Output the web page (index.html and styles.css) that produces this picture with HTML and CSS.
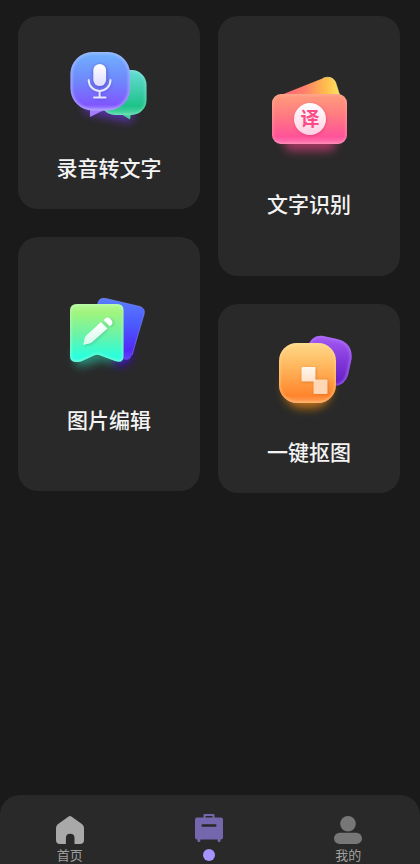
FILE: index.html
```html
<!DOCTYPE html>
<html lang="zh-CN">
<head>
<meta charset="utf-8">
<meta name="viewport" content="width=device-width, initial-scale=1">
<title>工具箱</title>
<link rel="stylesheet" href="styles.css">
</head>
<body>
<main class="tools">
  <div class="column">
    <a class="card card-audio" href="#audio">
      <svg class="art" viewBox="-1 5 120 96" aria-hidden="true">
        <defs>
          <linearGradient id="a-front" x1="0" y1="0" x2="0" y2="1"><stop offset="0" stop-color="#70b2ff"/><stop offset=".5" stop-color="#6f86fb"/><stop offset=".9" stop-color="#8057ff"/><stop offset="1" stop-color="#a184ff"/></linearGradient>
          <linearGradient id="a-back" x1="0" y1="0" x2="0" y2="1"><stop offset="0" stop-color="#68dcd6"/><stop offset=".8" stop-color="#1fc28a"/><stop offset="1" stop-color="#55d7a6"/></linearGradient>
          <linearGradient id="a-mic" x1="0" y1="0" x2="0" y2="1"><stop offset="0" stop-color="#fff"/><stop offset="1" stop-color="#dfdcff"/></linearGradient>
          <filter id="glow" x="-50%" y="-120%" width="200%" height="340%"><feGaussianBlur stdDeviation="5"/></filter>
          <filter id="soft" x="-20%" y="-20%" width="140%" height="140%"><feGaussianBlur stdDeviation="1.5"/></filter>
          <clipPath id="a-clip"><rect x="20.500" y="17" width="59.500" height="58.500" rx="22"/></clipPath>
          <clipPath id="a-clip2"><rect x="50" y="35" width="46.500" height="45" rx="15"/></clipPath>
        </defs>
        <path d="M34 66H84L82 87 65 84 50 81 34 77Z" fill="#6a35d8" opacity=".75" filter="url(#glow)"/>
        <path d="M71 79L80 84.500 81 78Z" fill="#48d09c"/>
        <rect x="50" y="35" width="46.500" height="45" rx="15" fill="url(#a-back)"/>
        <g clip-path="url(#a-clip2)"><rect x="50" y="35" width="46.500" height="45" rx="15" fill="none" stroke="#a6f2dd" stroke-width="2" opacity=".6" filter="url(#soft)"/></g>
        <path d="M40 73V82L56 74Z" fill="#a77dff"/>
        <rect x="20.500" y="17" width="59.500" height="58.500" rx="22" fill="url(#a-front)"/>
        <g clip-path="url(#a-clip)"><rect x="20.500" y="17" width="59.500" height="58.500" rx="22" fill="none" stroke="#c3c5ff" stroke-width="3" opacity=".7" filter="url(#soft)"/></g>
        <g transform="translate(.5 1)" opacity=".45" filter="url(#soft)" stroke="#4333b4" fill="none" stroke-width="2"><rect x="43" y="29" width="13" height="22" rx="6.500" fill="#4333b4"/><path d="M39 45a10.500 10.500 0 0 0 21 0M49.500 56v6M44 62.500h12"/></g>
        <rect x="43.300" y="29" width="12.800" height="22" rx="6.400" fill="url(#a-mic)"/>
        <path d="M38.700 45a10.900 10.900 0 0 0 21.800 0M49.600 56v6M44 62.500h11.500" fill="none" stroke="#e8e8ff" stroke-width="2" stroke-linecap="round"/>
      </svg>
      <span class="card-title">录音转文字</span>
    </a>
    <a class="card card-edit" href="#edit">
      <svg class="art" viewBox="-1 12 120 96" aria-hidden="true">
        <defs>
          <linearGradient id="e-front" x1="0" y1="0" x2="0" y2="1"><stop offset="0" stop-color="#b4f995"/><stop offset=".15" stop-color="#a0f47d"/><stop offset=".55" stop-color="#68f3aa"/><stop offset=".9" stop-color="#2affdc"/><stop offset="1" stop-color="#3df5dc"/></linearGradient>
          <linearGradient id="e-back" x1="0" y1="0" x2="0" y2="1"><stop offset="0" stop-color="#5a7dff"/><stop offset=".45" stop-color="#4b58ff"/><stop offset=".85" stop-color="#5427fa"/><stop offset="1" stop-color="#6545f3"/></linearGradient>
          <linearGradient id="e-pen" x1="0" y1="0" x2="0" y2="1"><stop offset="0" stop-color="#fff"/><stop offset="1" stop-color="#d5faea"/></linearGradient>
          <clipPath id="e-clip"><path d="M27 24H67Q73.500 24 73.500 30V76Q73.500 84 65 81L49 75Q46.500 74.200 44 75.500L31 81.500Q20 84 20 76V31Q20 24 27 24Z"/></clipPath>
        </defs>
        <path d="M24 69H66V84L52 80 34 86H26Z" fill="#29cfae" opacity=".6" filter="url(#glow)"/>
        <path d="M65 62H81V80L67 88Z" fill="#4710ff" opacity=".75" filter="url(#glow)"/>
        <path d="M52.500 18.300Q54 18 56 18.500L90 26.500Q95.500 28.500 94.200 34L82 75Q80.500 79.800 76 79.700L66 78 47.500 25Q48 19 52.500 18.300Z" fill="url(#e-back)"/>
        <path d="M47.500 24Q49 17 56 18.500L90 26.500Q95.500 28.500 94.200 34L82 75" fill="none" stroke="#8496ff" opacity=".5"/>
        <path d="M27 24H67Q73.500 24 73.500 30V76Q73.500 84 65 81L49 75Q46.500 74.200 44 75.500L31 81.500Q20 84 20 76V31Q20 24 27 24Z" fill="url(#e-front)"/>
        <g clip-path="url(#e-clip)"><path d="M27 24H67Q73.500 24 73.500 30V76Q73.500 84 65 81L49 75Q46.500 74.200 44 75.500L31 81.500Q20 84 20 76V31Q20 24 27 24Z" fill="none" stroke="#c8ffdc" stroke-width="2" opacity=".6" filter="url(#soft)"/></g>
        <g opacity=".35" filter="url(#soft)" transform="translate(1 1)" fill="#127e72"><path d="M33 65L35.500 57 51 42 57 48 41 63Z"/><path d="M54 40L58 37.500 62 40 63 43 59 46Z"/></g>
        <path d="M33 65L34.800 58Q35.200 56.500 36.200 55.500L51 42 57.500 48.500 42 62.300Q41 63.200 39.500 63.500Z" fill="url(#e-pen)"/>
        <path d="M53.500 40L56 38Q58 36.800 60 38.500L62 41Q63.300 43 61.800 44.500L59.800 46.300Z" fill="#fff"/>
      </svg>
      <span class="card-title">图片编辑</span>
    </a>
  </div>
  <div class="column">
    <a class="card card-text" href="#text">
      <svg class="art" viewBox="-1 16 120 96" aria-hidden="true">
        <defs>
          <linearGradient id="t-front" x1="0" y1="0" x2="0" y2="1"><stop offset="0" stop-color="#ff9d7c"/><stop offset=".4" stop-color="#ff7d80"/><stop offset=".85" stop-color="#ff5399"/><stop offset="1" stop-color="#ff79b6"/></linearGradient>
          <linearGradient id="t-back" x1="0" y1="0" x2="1" y2="0"><stop offset="0" stop-color="#ff6678"/><stop offset=".4" stop-color="#ff806c"/><stop offset=".75" stop-color="#ffbd4d"/><stop offset="1" stop-color="#ffe564"/></linearGradient>
          <linearGradient id="t-disc" x1="0" y1="0" x2="0" y2="1"><stop offset="0" stop-color="#fff"/><stop offset="1" stop-color="#ffd1e2"/></linearGradient>
          <clipPath id="t-clip"><rect x="22" y="34" width="75" height="50" rx="9"/></clipPath>
        </defs>
        <rect x="34" y="72" width="52" height="19" rx="8" fill="#e2417e" opacity=".65" filter="url(#glow)"/>
        <path d="M31 35L73 18.200Q82 15 85.500 22L90.500 38H31Z" fill="url(#t-back)"/>
        <path d="M73 18.200Q82 15 85.500 22L90 36" fill="none" stroke="#ffef8c" opacity=".6"/>
        <rect x="22" y="34" width="75" height="50" rx="9" fill="url(#t-front)"/>
        <g clip-path="url(#t-clip)"><rect x="22" y="34" width="75" height="50" rx="9" fill="none" stroke="#ffc0b4" stroke-width="2" opacity=".5" filter="url(#soft)"/></g>
        <circle cx="60.500" cy="60" r="16" fill="#d72869" opacity=".5" filter="url(#soft)"/>
        <circle cx="60" cy="59" r="16" fill="url(#t-disc)"/>
        <text class="art-glyph" x="60" y="66">译</text>
      </svg>
      <span class="card-title">文字识别</span>
    </a>
    <a class="card card-cutout" href="#cutout">
      <svg class="art" viewBox="-1 4 120 96" aria-hidden="true">
        <defs>
          <linearGradient id="c-front" x1="0" y1="0" x2="0" y2="1"><stop offset="0" stop-color="#ffd988"/><stop offset=".4" stop-color="#ffb65c"/><stop offset=".88" stop-color="#ff842c"/><stop offset="1" stop-color="#ffa15c"/></linearGradient>
          <linearGradient id="c-back" x1="0" y1="0" x2="0" y2="1"><stop offset="0" stop-color="#a65df4"/><stop offset=".45" stop-color="#843bdc"/><stop offset="1" stop-color="#601cc0"/></linearGradient>
          <linearGradient id="c-square" x1="0" y1="0" x2="0" y2="1"><stop offset="0" stop-color="#fff8ee"/><stop offset="1" stop-color="#ffe1c8"/></linearGradient>
          <clipPath id="c-clip"><rect x="29" y="23" width="57" height="60" rx="18"/></clipPath>
          <clipPath id="c-clip2"><path d="M73 16L87 19Q103 23 101.500 39L98 55Q95 65 85 66L58 60 57 28Q62 14 73 16Z"/></clipPath>
        </defs>
        <rect x="34" y="48" width="47" height="40" rx="18" fill="#ff920f" opacity=".7" filter="url(#glow)"/>
        <path d="M73 16L87 19Q103 23 101.500 39L98 55Q95 65 85 66L58 60 57 28Q62 14 73 16Z" fill="url(#c-back)"/>
        <g clip-path="url(#c-clip2)"><path d="M57 28Q62 14 73 16L87 19Q103 23 101.500 39L98 55Q95 65 85 66" fill="none" stroke="#b879ff" stroke-width="3" opacity=".75" filter="url(#soft)"/></g>
        <rect x="29" y="23" width="57" height="60" rx="18" fill="url(#c-front)"/>
        <g clip-path="url(#c-clip)"><rect x="29" y="23" width="57" height="60" rx="18" fill="none" stroke="#ffe4a5" stroke-width="2" opacity=".6" filter="url(#soft)"/></g>
        <path d="M52 48h14v12h12v14H64V62H52Z" fill="#b54d0d" opacity=".5" filter="url(#soft)"/>
        <rect x="63.500" y="59.500" width="14" height="14.500" rx="1" fill="#ffd7b5"/>
        <rect x="51.500" y="47" width="14" height="14.500" rx="1" fill="url(#c-square)"/>
      </svg>
      <span class="card-title">一键抠图</span>
    </a>
  </div>
</main>
<nav class="tabbar" aria-label="主导航">
  <a class="tab tab-home" href="#home">
    <svg class="tab-icon" viewBox="0 0 28 28" aria-hidden="true"><path fill="currentColor" d="M12.300 .7Q14-.6 15.700 .7L26.200 8.200Q28 9.600 28 12V24Q28 28 24 28H18.500V22Q18.500 17.700 14.200 17.700T9.900 22V28H4Q0 28 0 24V12Q0 9.600 1.800 8.200Z"/></svg>
    <span>首页</span>
  </a>
  <a class="tab tab-tools" href="#tools" aria-label="工具" aria-current="page">
    <svg class="tab-icon" viewBox="0 0 28 28" aria-hidden="true"><path fill="currentColor" fill-rule="evenodd" d="M8.500 3.500V1Q8.500 0 9.500 0H18.500Q19.500 0 19.500 1V3.500H26Q28 3.500 28 5.500V23.500Q28 25.500 26 25.500H25.500V27Q25.500 28 24.500 28H23.700Q22.700 28 22.700 27V25.500H5.300V27Q5.300 28 4.300 28H3.500Q2.500 28 2.500 27V25.500H2Q0 25.500 0 23.500V5.500Q0 3.500 2 3.500ZM10.500 2V3.500H17.500V2ZM7.500 10.200Q6.500 10.200 6.500 11.500T7.500 12.800H20.500Q21.500 12.800 21.500 11.500T20.500 10.200Z"/></svg>
    <span class="dot"></span>
  </a>
  <a class="tab tab-me" href="#me">
    <svg class="tab-icon" viewBox="0 0 28 28" aria-hidden="true"><g fill="currentColor"><circle cx="14" cy="7.800" r="7.800"/><rect y="16.800" width="28" height="11.200" rx="5.600"/></g></svg>
    <span>我的</span>
  </a>
</nav>
</body>
</html>
```
FILE: styles.css
```css
* {
  box-sizing: border-box;
}

body {
  display: flex;
  flex-direction: column;
  min-height: 100vh;
  margin: 0;
  background: #1a1a1a;
  color: #f4f4f4;
  font-family: "Noto Sans CJK SC", sans-serif;
}

a {
  color: inherit;
  text-decoration: none;
}

.tools {
  display: grid;
  grid-template-columns: 1fr 1fr;
  gap: 18px;
  align-items: start;
  flex: 1;
  padding: 16px 20px 16px 18px;
}

.column {
  display: flex;
  flex-direction: column;
  gap: 28px;
}

.card {
  display: flex;
  flex-direction: column;
  align-items: center;
  gap: 17px;
  border-radius: 20px;
  background: #292929;
}

.card-audio {
  padding: 24px 0 28px;
}

.card-edit {
  padding: 55px 0 58px;
}

.card-text {
  padding: 60px 0 59px;
}

.card-cutout {
  padding: 20px 0 28px;
}

.art {
  display: block;
  width: 120px;
  height: 96px;
  overflow: visible;
}

.art-glyph {
  fill: #fb4c85;
  font-size: 19px;
  font-weight: 700;
  text-anchor: middle;
}

.card-title {
  font-size: 21px;
  font-weight: 500;
  line-height: 28px;
}

.tabbar {
  display: grid;
  grid-template-columns: repeat(3, 1fr);
  padding: 21px 2px 2px 0;
  border-radius: 20px 20px 0 0;
  background: #292929;
}

.tab {
  display: flex;
  flex-direction: column;
  align-items: center;
  gap: 4px;
  color: #a0a0a0;
  font-size: 13px;
  line-height: 14px;
}

.tab-icon {
  display: block;
  width: 28px;
  height: 28px;
}

.tab-home .tab-icon {
  color: #a9a9a9;
}

.tab-me .tab-icon {
  color: #777;
}

.tab-tools {
  gap: 7px;
  margin-top: -2px;
}

.tab-tools .tab-icon {
  color: #7567ad;
}

.dot {
  width: 12px;
  height: 12px;
  border-radius: 50%;
  background: #a594ff;
}
```
